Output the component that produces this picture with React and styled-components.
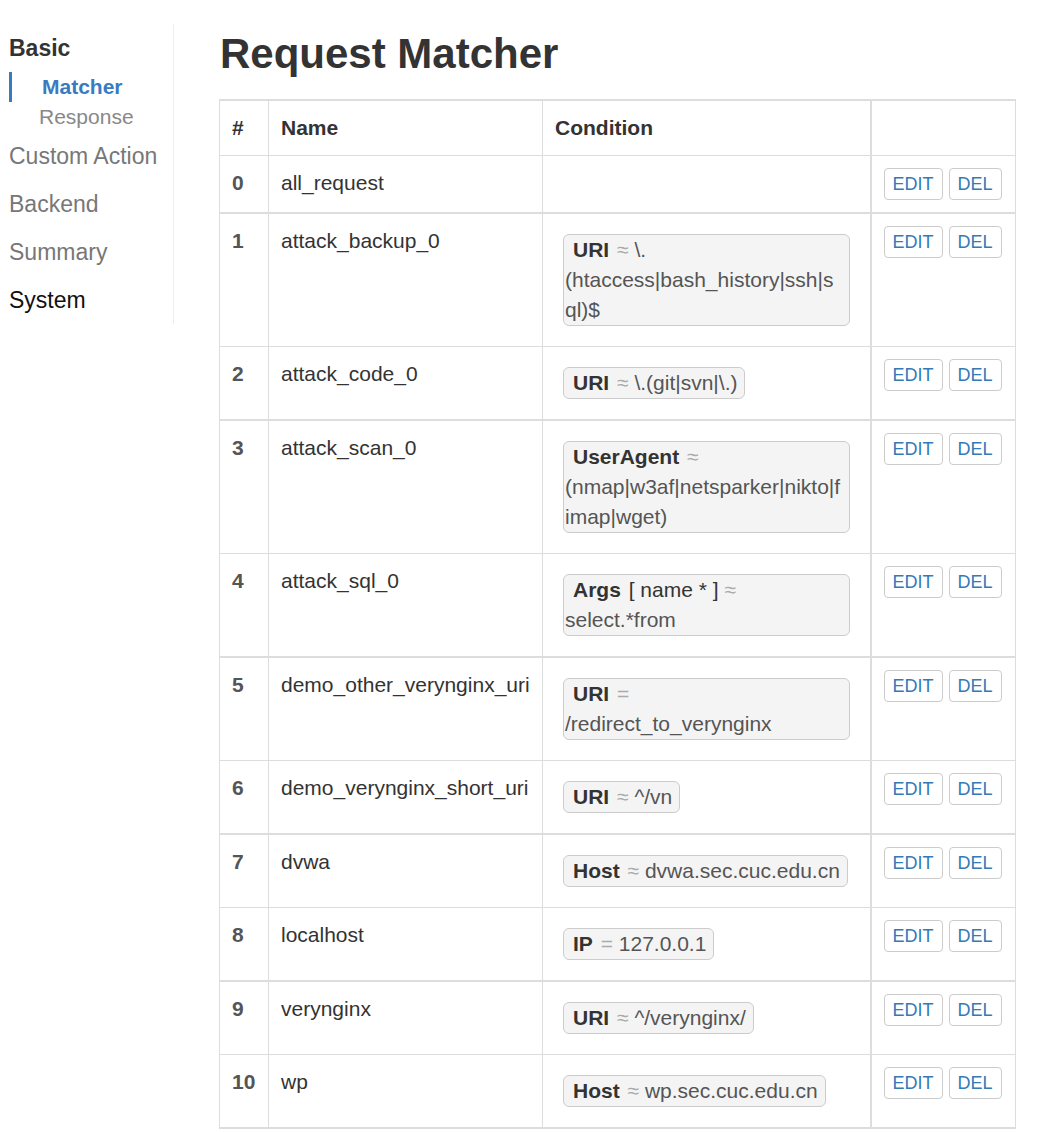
import React from 'react';
import styled, { createGlobalStyle } from 'styled-components';

const Global = createGlobalStyle`
  html, body { margin: 0; padding: 0; background: #fff; }
  body { font-family: "Liberation Sans", Arial, sans-serif; color: #333; }
`;

const Page = styled.div`
  display: flex;
  align-items: flex-start;
`;

const Sidebar = styled.nav`
  width: 164px;
  margin-top: 24px;
  padding-left: 9px;
  border-right: 1px solid #eee;
  display: flex;
  flex-direction: column;
`;

const NavItem = styled.div`
  font-size: 23px;
  line-height: 48px;
  white-space: nowrap;
  font-weight: ${(p) => (p.$bold ? 700 : 400)};
  color: ${(p) => p.$color || '#777'};
`;

const SubNav = styled.div`
  display: flex;
  flex-direction: column;
`;

const SubItem = styled.div`
  font-size: 21px;
  line-height: 30px;
  padding-left: 30px;
  white-space: nowrap;
  color: ${(p) => (p.$active ? '#3a7bc0' : '#888')};
  font-weight: ${(p) => (p.$active ? 700 : 400)};
  border-left: ${(p) => (p.$active ? '3px solid #3a7bc0' : 'none')};
`;

const Main = styled.main`
  margin-left: 45px;
  width: 796px;
`;

const Title = styled.h1`
  margin: 31px 0 22px 1px;
  font-size: 42px;
  line-height: 1.1;
  font-weight: 700;
  color: #333;
`;

const Table = styled.table`
  width: 796px;
  table-layout: fixed;
  border-collapse: collapse;
  border-top: 2px solid #ddd;
  border-bottom: 2px solid #ddd;
  font-size: 21px;
  line-height: 30px;
`;

const Th = styled.th`
  text-align: left;
  vertical-align: bottom;
  padding: 12px;
  font-weight: 700;
  color: #333;
  border: 1px solid #ddd;
  border-left-width: ${(p) => (p.$thickLeft ? '2px' : '1px')};
`;

const Td = styled.td`
  vertical-align: top;
  padding: 12px;
  color: #333;
  border: 1px solid #ddd;
  border-top-width: ${(p) => (p.$thick ? '2px' : '1px')};
  border-left-width: ${(p) => (p.$thickLeft ? '2px' : '1px')};
  font-weight: ${(p) => (p.$num ? 700 : 400)};
  ${(p) => (p.$num ? 'color: #555;' : '')}
  white-space: nowrap;
`;

const CondCell = styled(Td)`
  white-space: normal;
`;

const Cond = styled.span`
  display: inline-block;
  vertical-align: top;
  margin: 8px;
  padding: 0 7px 0 1px;
  border: 1px solid #ccc;
  border-radius: 6px;
  background: #f4f4f4;
  color: #555;
  overflow-wrap: anywhere;
`;

const CondLabel = styled.span`
  font-weight: 700;
  color: #333;
  margin-left: 8px;
  margin-right: 2px;
`;

const CondKey = styled.span`
  color: #333;
`;

const Op = styled.span`
  color: #aaa;
`;

const Btn = styled.button`
  display: inline-block;
  vertical-align: top;
  margin: 0 6px 0 0;
  padding: 0 8px;
  height: 32px;
  font-family: "Liberation Sans", Arial, sans-serif;
  font-size: 18px;
  line-height: 30px;
  color: #337ab7;
  background: #fff;
  border: 1px solid #ccc;
  border-radius: 4px;
`;

const rows = [
  { name: 'all_request' },
  { name: 'attack_backup_0', k: 'URI', op: '≈', v: '\\.(htaccess|bash_history|ssh|sql)$' },
  { name: 'attack_code_0', k: 'URI', op: '≈', v: '\\.(git|svn|\\.)' },
  { name: 'attack_scan_0', k: 'UserAgent', op: '≈', v: '(nmap|w3af|netsparker|nikto|fimap|wget)' },
  { name: 'attack_sql_0', k: 'Args', key: '[ name * ]', op: '≈', v: 'select.*from' },
  { name: 'demo_other_verynginx_uri', k: 'URI', op: '=', v: '/redirect_to_verynginx' },
  { name: 'demo_verynginx_short_uri', k: 'URI', op: '≈', v: '^/vn' },
  { name: 'dvwa', k: 'Host', op: '≈', v: 'dvwa.sec.cuc.edu.cn' },
  { name: 'localhost', k: 'IP', op: '=', v: '127.0.0.1' },
  { name: 'verynginx', k: 'URI', op: '≈', v: '^/verynginx/' },
  { name: 'wp', k: 'Host', op: '≈', v: 'wp.sec.cuc.edu.cn' },
];

export default function App() {
  return (
    <>
      <Global />
      <Page>
        <Sidebar>
          <NavItem $bold $color="#333">Basic</NavItem>
          <SubNav>
            <SubItem $active>Matcher</SubItem>
            <SubItem>Response</SubItem>
          </SubNav>
          <NavItem>Custom Action</NavItem>
          <NavItem>Backend</NavItem>
          <NavItem>Summary</NavItem>
          <NavItem $color="#111">System</NavItem>
        </Sidebar>
        <Main>
          <Title>Request Matcher</Title>
          <Table>
            <colgroup>
              <col style={{ width: 49 }} />
              <col style={{ width: 274 }} />
              <col style={{ width: 328 }} />
              <col style={{ width: 145 }} />
            </colgroup>
            <thead>
              <tr>
                <Th>#</Th>
                <Th>Name</Th>
                <Th>Condition</Th>
                <Th $thickLeft></Th>
              </tr>
            </thead>
            <tbody>
              {rows.map((r, i) => {
                const thick = i % 2 === 1;
                return (
                  <tr key={r.name}>
                    <Td $num $thick={thick}>{i}</Td>
                    <Td $thick={thick}>{r.name}</Td>
                    <CondCell $thick={thick}>
                      {r.k && (
                        <Cond>
                          <CondLabel>{r.k}</CondLabel>{' '}
                          {r.key && (
                            <>
                              <CondKey>{r.key}</CondKey>{' '}
                            </>
                          )}
                          <Op>{r.op}</Op> {r.v}
                        </Cond>
                      )}
                    </CondCell>
                    <Td $thick={thick} $thickLeft>
                      <Btn>EDIT</Btn>
                      <Btn>DEL</Btn>
                    </Td>
                  </tr>
                );
              })}
            </tbody>
          </Table>
        </Main>
      </Page>
    </>
  );
}
